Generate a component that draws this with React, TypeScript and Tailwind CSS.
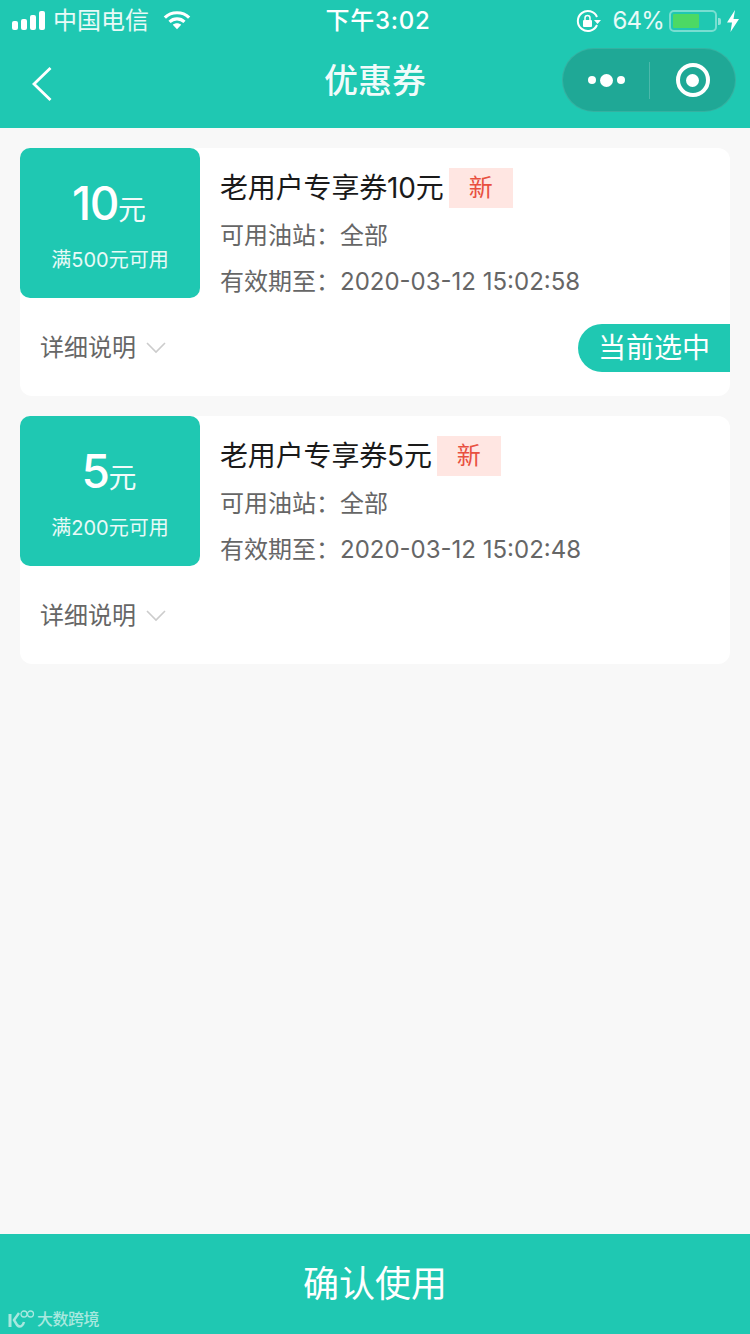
const FONT = "font-['Inter','Noto_Sans_CJK_SC',sans-serif]";

const StatusBar = () => (
  <div className="h-10 flex items-center justify-between relative pl-3 pr-[10px] pt-[2px] text-white">
    <div className="flex items-center">
      <div className="flex items-end gap-[3px] h-[20px] pb-[1px]">
        <span className="w-[6px] h-[9px] bg-white rounded-[2px]" />
        <span className="w-[6px] h-[11px] bg-white rounded-[2px]" />
        <span className="w-[6px] h-[15px] bg-white rounded-[2px]" />
        <span className="w-[6px] h-[19px] bg-white rounded-[2px]" />
      </div>
      <span className="ml-[8px] text-[24px] leading-[32px] text-white/90">中国电信</span>
      <svg width="28" height="22" viewBox="0 0 30 22" className="ml-[14px] mt-[-2px]">
        <path d="M2 8.5 C9 1.5 21 1.5 28 8.5" fill="none" stroke="#fff" strokeWidth="3.4" />
        <path d="M7 13 C11.5 8.8 18.5 8.8 23 13" fill="none" stroke="#fff" strokeWidth="3.4" />
        <path d="M10.5 16.2 C13 14 17 14 19.5 16.2 L15 21 Z" fill="#fff" />
      </svg>
    </div>
    <div className="absolute left-0 right-0 top-0 h-10 pt-[2px] pl-[6px] flex items-center justify-center text-[24px] font-medium tracking-[0.7px]">
      下午3:02
    </div>
    <div className="flex items-center">
      <svg width="26" height="24" viewBox="0 0 26 24" className="mr-[10px]">
        <path d="M21 8 A10 10 0 1 0 21 16" fill="none" stroke="#fff" strokeWidth="2" />
        <path d="M18 11 L25 11 L21.5 15 Z" fill="#fff" />
        <rect x="7" y="11" width="9" height="7" rx="1" fill="#fff" />
        <path d="M9 11 V9 a2.5 2.5 0 0 1 5 0 V11" fill="none" stroke="#fff" strokeWidth="1.5" />
      </svg>
      <span className="text-[24px] leading-[32px] text-white/90 tracking-[-0.8px]">64%</span>
      <div className="ml-[5px] w-[48px] h-[22px] rounded-[5px] border-2 border-white/40 p-[2px]">
        <div className="w-[26px] h-full bg-[#4cd964] rounded-[1px]" />
      </div>
      <span className="ml-[1px] w-[3px] h-[7px] bg-white/50 rounded-r-[2px]" />
      <svg width="14" height="22" viewBox="0 0 14 22" className="ml-[5px]">
        <path d="M9 0 L1 12.5 H6 L4.5 22 L13 9 H7.5 Z" fill="#fff" />
      </svg>
    </div>
  </div>
);

const NavBar = () => (
  <div className="h-[88px] relative flex items-center justify-between pl-[32px] pr-[14px] pb-[8px]">
    <svg width="20" height="36" viewBox="0 0 20 36" className="mt-[8px]">
      <path d="M18.5 2 L2 18 L18.5 34" fill="none" stroke="#fff" strokeWidth="2.8" />
    </svg>
    <div className="absolute inset-x-0 top-0 h-20 flex items-center justify-center text-[34px] font-medium text-white/95">
      优惠券
    </div>
    <div className="w-[174px] h-[64px] rounded-full bg-[#1fa896] border border-white/10 flex items-center">
      <div className="w-[86px] flex items-center justify-center gap-[4px]">
        <span className="w-2 h-2 rounded-full bg-white" />
        <span className="w-[13px] h-[13px] rounded-full bg-white" />
        <span className="w-2 h-2 rounded-full bg-white" />
      </div>
      <div className="w-px h-[37px] bg-white/20" />
      <div className="flex-1 flex items-center justify-center">
        <div className="w-[34px] h-[34px] rounded-full border-[4px] border-white flex items-center justify-center">
          <span className="w-[13px] h-[13px] rounded-full bg-white" />
        </div>
      </div>
    </div>
  </div>
);

type CouponProps = {
  amount: string;
  min: string;
  title: string;
  expire: string;
  selected?: boolean;
};

const Coupon = ({ amount, min, title, expire, selected }: CouponProps) => (
  <div className="bg-white rounded-[12px] h-[248px] flex flex-col">
    <div className="flex h-[150px]">
      <div className="w-[180px] h-[150px] bg-[#1fc8b2] rounded-[10px] flex flex-col items-center text-white">
        <div className="mt-[27px] h-[56px] flex items-baseline pr-[2px]">
          <span className="text-[46px] leading-[56px] font-medium tracking-[-1.5px]">{amount}</span>
          <span className="text-[28px] leading-[56px] text-white/95">元</span>
        </div>
        <div className="mt-[14px] text-[20px] leading-[30px] text-white/90">{min}</div>
      </div>
      <div className="pl-[20px] pt-[20px]">
        <div className="flex h-[40px] items-center">
          <span className="text-[28px] leading-[40px] text-[#1a1a1a] tracking-[-0.15px]">{title}</span>
          <span className="ml-[5px] w-[64px] h-[40px] bg-[#ffe6e2] text-[#e8503f] text-[24px] flex items-center justify-center">
            新
          </span>
        </div>
        <div className="mt-[8px] text-[24px] leading-[40px] text-[#666666] whitespace-nowrap">可用油站：全部</div>
        <div className="mt-[6px] text-[24px] leading-[40px] text-[#666666] whitespace-nowrap">有效期至：{expire}</div>
      </div>
    </div>
    <div className="flex items-center justify-between mt-[26px] h-[48px]">
      <div className="pl-[20px] flex items-center">
        <span className="text-[24px] text-[#666666]">详细说明</span>
        <svg width="20" height="12" viewBox="0 0 20 12" className="ml-[10px]">
          <path d="M1 1 L10 10 L19 1" fill="none" stroke="#cccccc" strokeWidth="1.6" />
        </svg>
      </div>
      {selected && (
        <div className="w-[152px] h-[48px] bg-[#1fc8b2] rounded-l-full text-white text-[28px] flex items-center pl-[20px]">
          当前选中
        </div>
      )}
    </div>
  </div>
);

const App = () => {
  return (
    <div className={`w-[750px] h-[1334px] bg-[#f8f8f8] flex flex-col relative overflow-hidden ${FONT}`}>
      <div className="bg-[#1fc8b2] h-[128px] shrink-0">
        <StatusBar />
        <NavBar />
      </div>
      <div className="flex-1 px-5 pt-5 flex flex-col gap-5">
        <Coupon
          amount="10"
          min="满500元可用"
          title="老用户专享券10元"
          expire="2020-03-12 15:02:58"
          selected
        />
        <Coupon
          amount="5"
          min="满200元可用"
          title="老用户专享券5元"
          expire="2020-03-12 15:02:48"
        />
      </div>
      <div className="h-[100px] shrink-0 bg-[#1fc8b2] flex items-center justify-center text-white text-[36px]">
        确认使用
      </div>
      <div className="absolute left-[8px] bottom-[5px] flex items-center">
        <svg width="28" height="20" viewBox="0 0 28 20" fill="none" stroke="#a8e8df">
          <path d="M2 5 V18" strokeWidth="3" />
          <path d="M11 4 L6 11 L9 16 C12 19 15 17 16 13" strokeWidth="2.5" />
          <circle cx="16" cy="5" r="3" strokeWidth="1.3" />
          <circle cx="22.5" cy="5" r="3" strokeWidth="1.3" />
        </svg>
        <span className="ml-[1px] text-[16px] leading-[20px] tracking-[-0.5px] font-medium text-[#a8e8df]">大数跨境</span>
      </div>
    </div>
  );
};

export default App;
